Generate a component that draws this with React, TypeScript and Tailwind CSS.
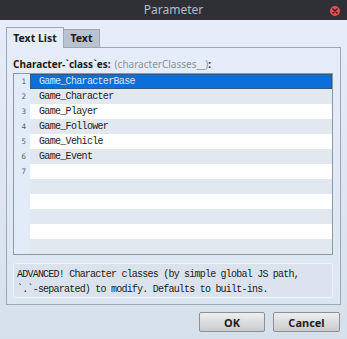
import React from "react";

const items = [
  "Game_CharacterBase",
  "Game_Character",
  "Game_Player",
  "Game_Follower",
  "Game_Vehicle",
  "Game_Event",
  "",
  "",
  "",
  "",
  "",
  "",
];

const mono: React.CSSProperties = {
  fontFamily: '"Liberation Mono", "DejaVu Sans Mono", monospace',
  fontSize: "10px",
  letterSpacing: "-0.68px",
};

export default function App() {
  return (
    <div
      className="w-[347px] h-[339px] flex flex-col overflow-hidden"
      style={{ fontFamily: '"Noto Sans", "DejaVu Sans", sans-serif' }}
    >
      {/* Title bar */}
      <div className="relative h-[20px] bg-[#2e3035] flex items-center justify-center shrink-0">
        <span className="text-[12px] leading-none text-[#b9bdc3]">Parameter</span>
        <div className="absolute right-[7px] top-[6px] w-[10px] h-[10px] rounded-full bg-[#df5158] flex items-center justify-center">
          <svg width="6" height="6" viewBox="0 0 6 6">
            <path d="M1 1 L5 5 M5 1 L1 5" stroke="#4a1517" strokeWidth="1.4" strokeLinecap="round" />
          </svg>
        </div>
      </div>

      {/* Body */}
      <div className="flex-1 flex flex-col bg-gradient-to-b from-[#e4edf9] to-[#d6e0ea] px-[6px] pt-[7px]">
        {/* Tabs */}
        <div className="flex items-end h-[20px]">
          <div className="relative z-10 h-[21px] w-[58px] -mb-px bg-[#e4edf9] border border-b-0 border-[#9ea8b2] flex items-center justify-center">
            <span className="text-[10.5px] font-bold text-[#1c1c1c] leading-none">Text List</span>
          </div>
          <div className="h-[18px] w-[36px] bg-[#b8c3cf] border border-l-0 border-b-0 border-[#9ea8b2] flex items-center justify-center">
            <span className="text-[10.5px] font-bold text-[#1c1c1c] leading-none">Text</span>
          </div>
        </div>

        {/* Panel */}
        <div className="h-[258px] w-[335px] border border-[#9ea8b2] bg-gradient-to-b from-[#e4edf9] to-[#dce6f1] pl-[6px] pt-[8px] flex flex-col">
          <div className="h-[16px] flex items-center text-[10px] leading-none whitespace-nowrap">
            <span className="font-bold text-[#1c1c1c]">Character-`class`es:</span>
            <span className="ml-[4px] text-[#8a929a]">(characterClasses__)</span>
            <span className="font-bold text-[#1c1c1c]">:</span>
          </div>

          {/* List */}
          <div className="mt-[1px] w-[320px] h-[182px] border border-[#8e98a2] flex bg-white">
            <div className="w-[16px] bg-[#e2ecf8] flex flex-col">
              {items.map((_, i) => (
                <div
                  key={i}
                  className="h-[15px] flex items-center justify-end pr-[4px] text-[7.5px] text-[#5a6068] leading-none"
                  style={{ fontFamily: '"DejaVu Sans Mono", monospace' }}
                >
                  {i < 7 ? i + 1 : ""}
                </div>
              ))}
            </div>
            <div className="flex-1 flex flex-col">
              {items.map((t, i) => (
                <div
                  key={i}
                  className={
                    i === 0
                      ? "h-[15px] bg-[#0b6fd9] border border-[#2f5a85] flex items-center pl-[8px] text-[#d6e6fb]"
                      : i % 2 === 1
                      ? "h-[15px] bg-[#e2e8ef] flex items-center pl-[9px] text-[#1c1c1c]"
                      : "h-[15px] bg-white flex items-center pl-[9px] text-[#1c1c1c]"
                  }
                  style={mono}
                >
                  {t}
                </div>
              ))}
            </div>
          </div>

          {/* Info box */}
          <div
            className="mt-[8px] w-[320px] h-[35px] rounded-[3px] border border-[#eef3f9] bg-[#dae3ed] px-[3px] pt-[3px] text-[#1c1c1c] leading-[15px]"
            style={{ ...mono, letterSpacing: "-0.78px" }}
          >
            <div>ADVANCED! Character classes (by simple global JS path,</div>
            <div>`.`-separated) to modify. Defaults to built-ins.</div>
          </div>
        </div>

        {/* Buttons */}
        <div className="flex justify-end gap-[8px] mt-[7px] pr-[1px]">
          <button className="w-[66px] h-[20px] rounded-[2px] border border-[#8d9196] bg-gradient-to-b from-[#eeeeee] to-[#c9cbcd] text-[11px] font-bold text-[#1e1e1e] leading-none">
            OK
          </button>
          <button className="w-[67px] h-[20px] rounded-[2px] border border-[#8d9196] bg-gradient-to-b from-[#eeeeee] to-[#c9cbcd] text-[11px] font-bold text-[#1e1e1e] leading-none">
            Cancel
          </button>
        </div>
      </div>
    </div>
  );
}
